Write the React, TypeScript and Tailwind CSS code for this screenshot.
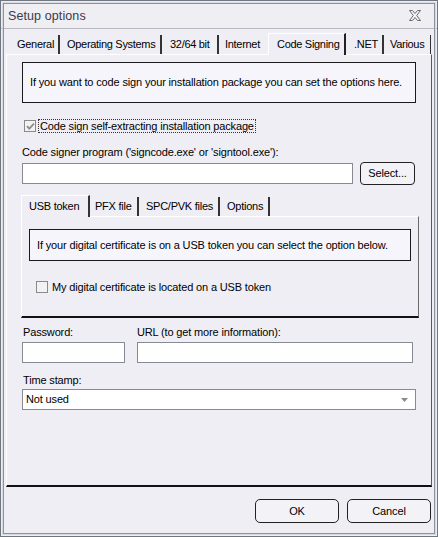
import React from "react";

const F = "font-['Liberation_Sans',Arial,sans-serif]";

function CheckBox({ checked }: { checked?: boolean }) {
  return (
    <div className="flex h-[12px] w-[12px] shrink-0 items-center justify-center border border-[#8a8a8a] bg-[#f2f2f2]">
      {checked && (
        <svg width="9" height="9" viewBox="0 0 9 9">
          <path d="M1 4.2 L3.3 6.6 L8 1.6" fill="none" stroke="#8c8c8c" strokeWidth="1.8" />
        </svg>
      )}
    </div>
  );
}

export default function App() {
  return (
    <div className={`${F} relative h-[537px] w-[438px] overflow-hidden whitespace-nowrap border border-[#6e7680] bg-[#efeef4] text-[11px] tracking-[-0.15px] text-black`}>
      <div className="pointer-events-none absolute inset-[1px] border border-[#d8d8de]" />
      <div className="pointer-events-none absolute inset-[2px] border border-[#8d939b]" />
      {/* Title bar */}
      <div className="flex h-[28px] items-center justify-between border-b border-[#b8b8c0] bg-[#efeef3] pl-[7px] pr-[15px] pt-[3px]">
        <span className="text-[12.5px] tracking-[0.1px] text-[#3a3a4a]">Setup options</span>
        <svg width="14" height="11" viewBox="0 0 14 11" className="mb-[2px]">
          <path d="M1.5 0.5 H4.5 L7 3.5 L9.5 0.5 H12.5 L8.7 5.5 L12.5 10.5 H9.5 L7 7.5 L4.5 10.5 H1.5 L5.3 5.5 Z" fill="#f4f4f6" stroke="#6a6a72" strokeWidth="1" />
        </svg>
      </div>

      <div className="px-[5px]">
        {/* Top tabs */}
        <div className="mt-[6px] flex h-[19px] items-end pl-[6px] tracking-[-0.3px]">
          <div className="flex h-[19px] w-[48px] items-center border-r-[2px] border-r-[#333] pl-[5px]">General</div>
          <div className="flex h-[19px] w-[102px] items-center border-r-[2px] border-r-[#333] pl-[7px]">Operating Systems</div>
          <div className="flex h-[19px] w-[57px] items-center border-r-[2px] border-r-[#333] pl-[8px]">32/64 bit</div>
          <div className="flex h-[19px] w-[49px] items-center pl-[6px]">Internet</div>
          <div className="relative z-10 -mb-[1px] flex h-[22px] w-[78px] items-center border-l border-t border-white border-r-[2px] border-r-[#222] bg-[#efeef4] pl-[8px]">
            Code Signing
          </div>
          <div className="flex h-[19px] w-[38px] items-center border-r-[2px] border-r-[#333] pl-[8px]">.NET</div>
          <div className="flex h-[19px] w-[47px] items-center border-r border-r-[#333] pl-[6px]">Various</div>
        </div>

        {/* Panel */}
        <div className="flex h-[433px] w-[426px] flex-col border-l border-t border-white border-r border-r-[#5a5a5a] border-b-[2px] border-b-[#111] bg-[#efeef4] pl-[15px] pr-[14px]">
          <div className="mt-[7px] flex h-[41px] w-[394px] shrink-0 items-center border border-[#1a1a1a] bg-[#f6f5fc] pl-[7px]">
            If you want to code sign your installation package you can set the options here.
          </div>

          <div className="mt-[17px] flex h-[12px] items-center pl-[2px]">
            <CheckBox checked />
            <span className="ml-[2px] border border-dotted border-[#333] px-[1px] leading-[12px]">
              Code sign self-extracting installation package
            </span>
          </div>

          <div className="mt-[13px] h-[14px] leading-[14px]">Code signer program ('signcode.exe' or 'signtool.exe'):</div>

          <div className="mt-[3px] flex h-[23px] items-center">
            <div className="h-[21px] w-[331px] border border-[#868a92] bg-white" />
            <div className="ml-[7px] flex h-[23px] w-[55px] items-center justify-center rounded-[4px] border border-[#222] bg-[#f3f2f7]">
              Select...
            </div>
          </div>

          {/* Inner tabs */}
          <div className="-ml-[1px] mt-[12px] flex h-[19px] items-end tracking-[-0.25px]">
            <div className="relative z-10 -mb-[1px] flex h-[22px] w-[69px] items-center border-l border-t border-white border-r-[2px] border-r-[#333] bg-[#efeef4] pl-[7px]">USB token</div>
            <div className="flex h-[19px] w-[49px] items-center border-r-[2px] border-r-[#333] pl-[5px]">PFX file</div>
            <div className="flex h-[19px] w-[81px] items-center border-r-[2px] border-r-[#333] pl-[7px]">SPC/PVK files</div>
            <div className="flex h-[19px] w-[50px] items-center border-r-[2px] border-r-[#333] pl-[7px]">Options</div>
          </div>
          <div className="-ml-[1px] h-[102px] w-[398px] shrink-0 border-l border-t border-white border-r border-r-[#6a6a6a] border-b-[2px] border-b-[#111] pl-[7px]">
            <div className="mt-[12px] flex h-[32px] w-[382px] items-center border border-[#1a1a1a] bg-[#f6f5fc] pl-[7px]">
              If your digital certificate is on a USB token you can select the option below.
            </div>
            <div className="mt-[20px] flex h-[12px] items-center pl-[7px]">
              <CheckBox />
              <span className="ml-[4px]">My digital certificate is located on a USB token</span>
            </div>
          </div>

          <div className="mt-[7px] flex h-[14px] leading-[14px]">
            <span className="w-[115px] pl-[1px]">Password:</span>
            <span>URL (to get more information):</span>
          </div>
          <div className="mt-[3px] flex">
            <div className="h-[21px] w-[103px] border border-[#868a92] bg-white" />
            <div className="ml-[12px] h-[21px] w-[276px] border border-[#868a92] bg-white" />
          </div>

          <div className="mt-[10px] h-[14px] pl-[1px] leading-[14px]">Time stamp:</div>
          <div className="mt-[2px] flex h-[21px] w-[394px] items-center justify-between border border-[#868a92] bg-white pl-[3px] pr-[7px]">
            <span>Not used</span>
            <svg width="7" height="4" viewBox="0 0 7 4">
              <path d="M0 0 H7 L3.5 4 Z" fill="#8a8a8a" />
            </svg>
          </div>
        </div>
      </div>

      {/* Buttons */}
      <div className="mt-[12px] flex justify-end gap-[8px] pr-[6px]">
        <div className="flex h-[24px] w-[84px] items-center justify-center rounded-[5px] border border-[#222] bg-[#f3f2f7]">OK</div>
        <div className="flex h-[24px] w-[84px] items-center justify-center rounded-[5px] border border-[#222] bg-[#f3f2f7]">Cancel</div>
      </div>
    </div>
  );
}
